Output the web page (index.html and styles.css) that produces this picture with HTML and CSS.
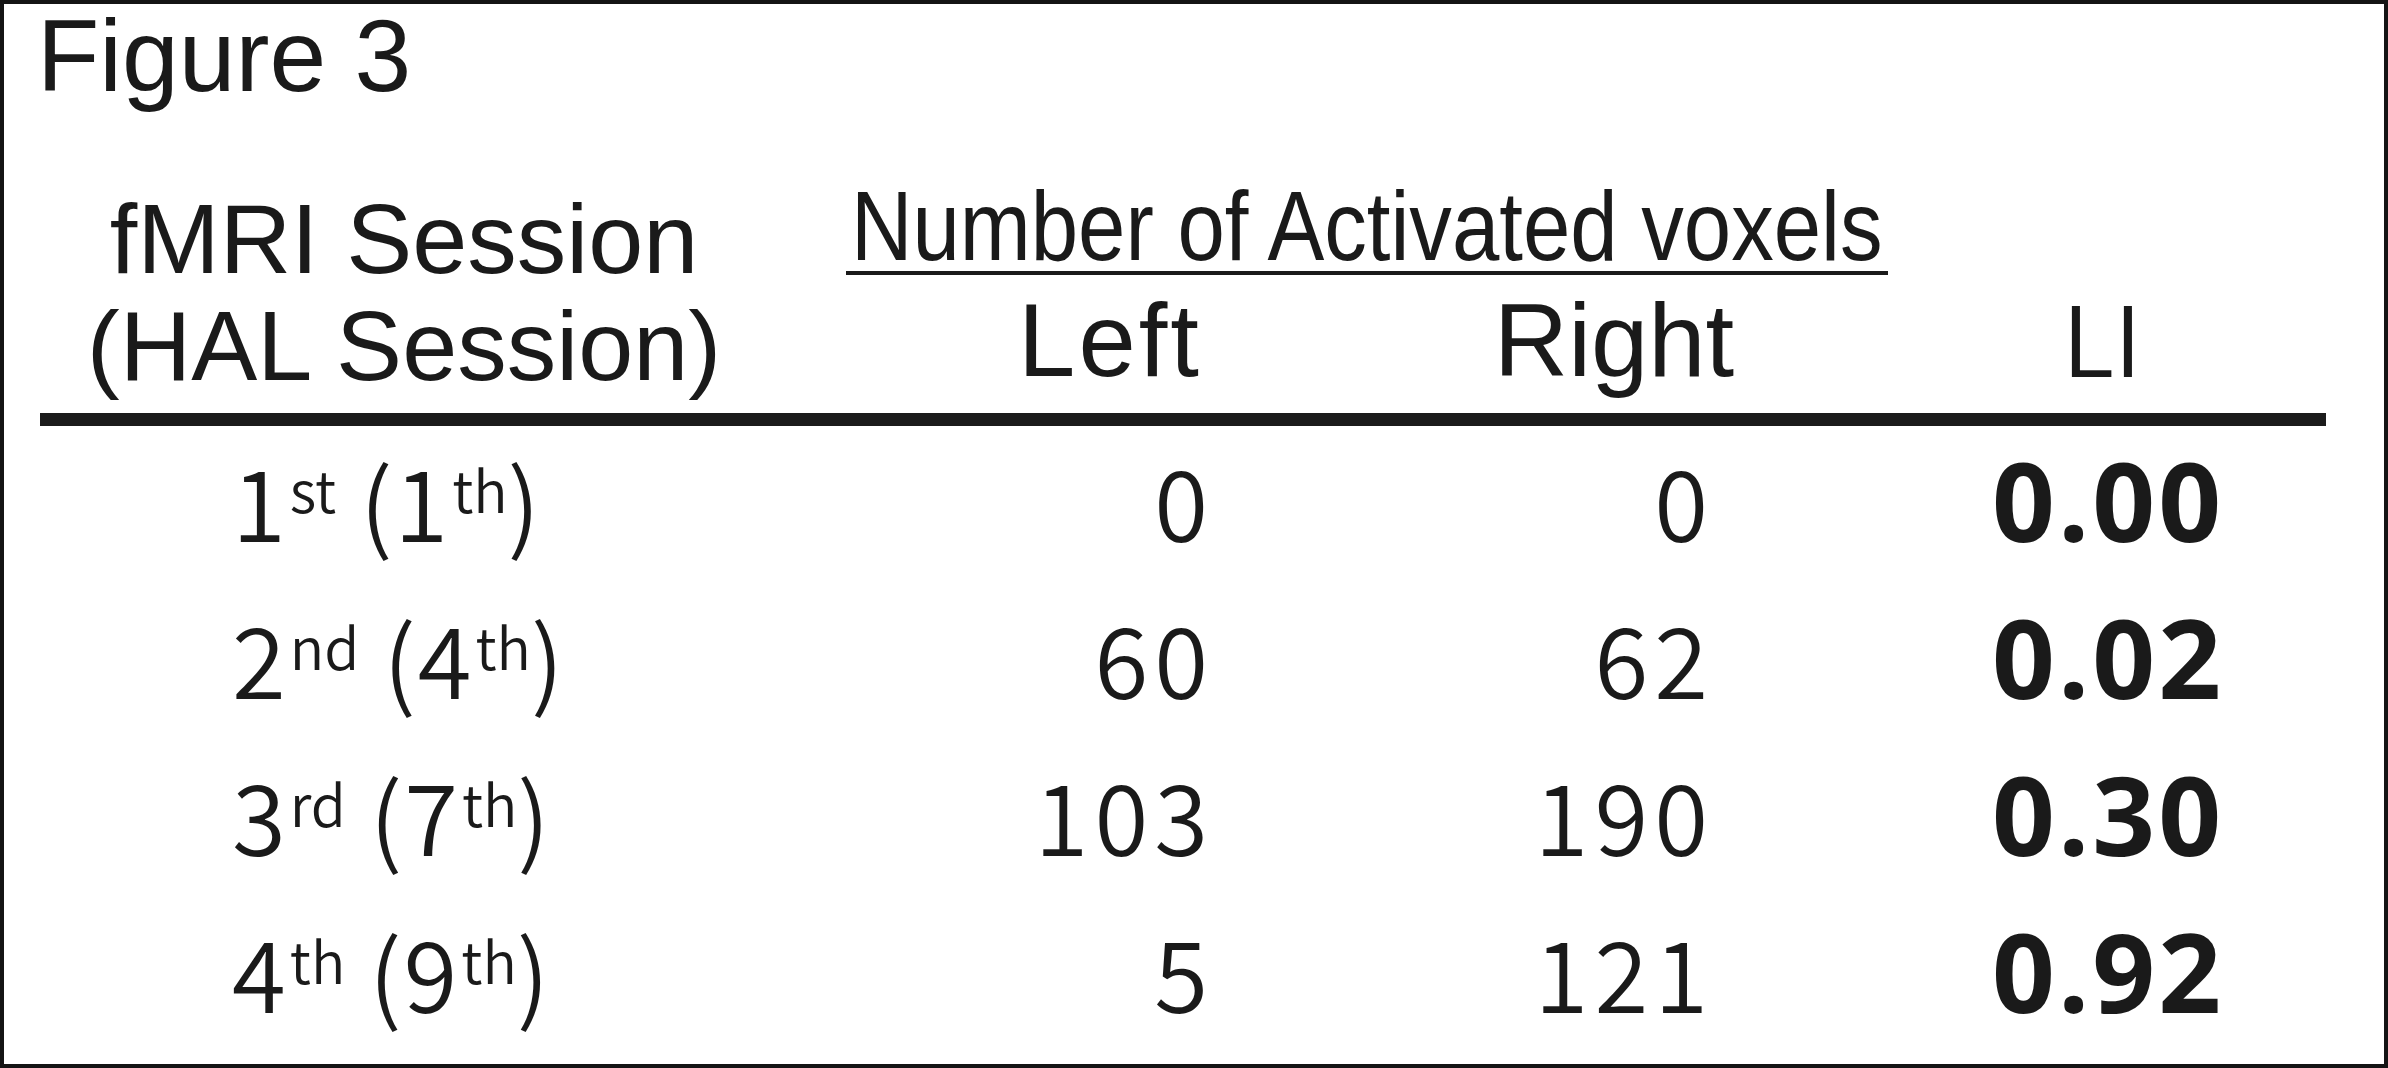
FILE: index.html
```html
<!DOCTYPE html>
<html lang="en">
<head>
<meta charset="utf-8">
<title>Figure 3</title>
<link rel="stylesheet" href="styles.css">
</head>
<body>
<div class="frame">
  <div class="title">Figure 3</div>
  <div class="grid">
    <div class="h-session">fMRI Session<br>(HAL Session)</div>
    <div class="h-span"><span class="h-span-text">Number of Activated voxels</span></div>
    <div class="h-left">Left</div>
    <div class="h-right">Right</div>
    <div class="h-li">LI</div>
    <div class="rule"></div>

    <div class="c-session">1<sup>st</sup> (1<sup>th</sup>)</div>
    <div class="c-left">0</div>
    <div class="c-right">0</div>
    <div class="c-li">0.00</div>

    <div class="c-session">2<sup>nd</sup> (4<sup>th</sup>)</div>
    <div class="c-left">60</div>
    <div class="c-right">62</div>
    <div class="c-li">0.02</div>

    <div class="c-session">3<sup>rd</sup> (7<sup>th</sup>)</div>
    <div class="c-left">103</div>
    <div class="c-right">190</div>
    <div class="c-li">0.30</div>

    <div class="c-session">4<sup>th</sup> (9<sup>th</sup>)</div>
    <div class="c-left">5</div>
    <div class="c-right">121</div>
    <div class="c-li">0.92</div>
  </div>
</div>
</body>
</html>
```

FILE: styles.css
```css
html, body {
  margin: 0;
  padding: 0;
  background: #ffffff;
}

.frame {
  box-sizing: border-box;
  width: 2388px;
  height: 1068px;
  border: 4px solid #141414;
  background: #ffffff;
  color: #1a1a1a;
  overflow: hidden;
}

.title {
  font-family: "Liberation Sans", Arial, sans-serif;
  font-size: 102px;
  line-height: 100px;
  padding-top: 2px;
  padding-left: 33px;
  white-space: nowrap;
}

.grid {
  margin-top: 64px;
  margin-left: 36px;
  width: 2286px;
  display: grid;
  grid-template-columns: 728px 684px 324px 550px;
  grid-template-rows: 110px 133px 13px repeat(4, 157px);
}

.h-session {
  grid-column: 1;
  grid-row: 1 / 3;
  font-family: "Liberation Sans", Arial, sans-serif;
  font-size: 99px;
  line-height: 107px;
  padding-top: 15px;
  text-align: center;
  white-space: nowrap;
}

.h-span {
  grid-column: 2 / 5;
  grid-row: 1;
  justify-self: start;
  align-self: start;
  margin-left: 78px;
  margin-top: 11px;
  width: 1042px;
  height: 90px;
  border-bottom: 4px solid #1a1a1a;
  display: flex;
  justify-content: center;
  font-family: "Liberation Sans", Arial, sans-serif;
  font-size: 99px;
  line-height: 90px;
  white-space: nowrap;
}

.h-span-text {
  display: inline-block;
  transform: scaleX(0.86);
  transform-origin: center;
}

.h-left,
.h-right {
  grid-row: 2;
  font-family: "Liberation Sans", Arial, sans-serif;
  font-size: 103px;
  line-height: 99px;
  padding-top: 11px;
  text-align: center;
}

.h-left {
  grid-column: 2;
  letter-spacing: 3px;
}

.h-right { grid-column: 3; }

.h-li {
  grid-column: 4;
  grid-row: 2;
  font-family: "Noto Sans CJK JP", sans-serif;
  font-weight: 350;
  font-size: 97px;
  line-height: 97px;
  padding-top: 6px;
  padding-left: 102px;
  text-align: center;
}

.rule {
  grid-column: 1 / -1;
  grid-row: 3;
  background: #1b1b1b;
}

.c-session,
.c-left,
.c-right {
  font-family: "Noto Sans CJK JP", sans-serif;
  font-weight: 350;
  font-size: 98px;
  line-height: 147px;
  padding-bottom: 10px;
  white-space: nowrap;
}

.c-session {
  grid-column: 1;
  padding-left: 192px;
  text-align: left;
  letter-spacing: 2px;
}

.c-session sup {
  font-size: 57px;
  line-height: 0;
  vertical-align: 29px;
  margin-left: 2px;
  letter-spacing: 0;
}

.c-left {
  grid-column: 2;
  text-align: right;
  padding-right: 238px;
  letter-spacing: 6px;
}

.c-right {
  grid-column: 3;
  text-align: right;
  padding-right: 62px;
  letter-spacing: 6px;
}

.c-li {
  grid-column: 4;
  font-family: "Open Sans", "Noto Sans", sans-serif;
  font-weight: 700;
  font-size: 110px;
  line-height: 147px;
  padding-bottom: 10px;
  padding-left: 216px;
  letter-spacing: 3px;
  white-space: nowrap;
}
```
